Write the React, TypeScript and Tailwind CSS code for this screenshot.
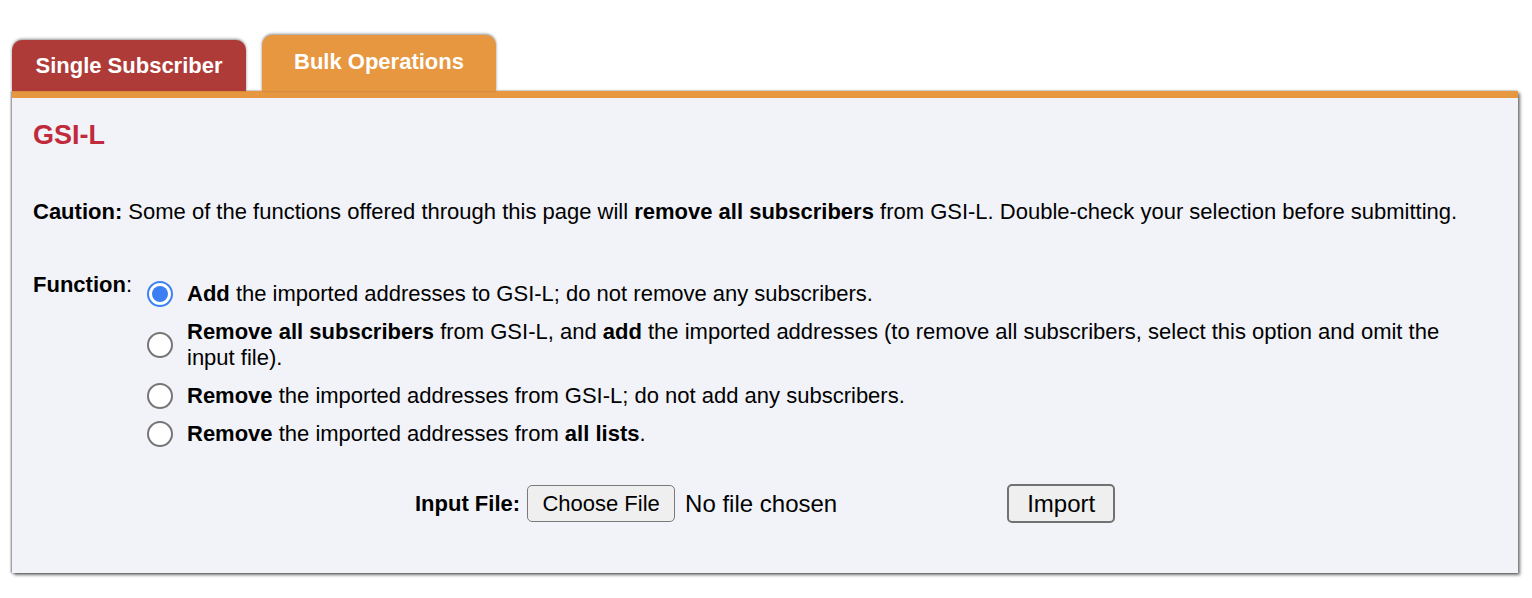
import React, { useState } from 'react';

const options = [
  {
    id: 'add',
    content: (
      <>
        <b>Add</b> the imported addresses to GSI-L; do not remove any subscribers.
      </>
    ),
  },
  {
    id: 'replace',
    content: (
      <>
        <b>Remove all subscribers</b> from GSI-L, and <b>add</b> the imported addresses (to remove all subscribers, select this option and omit the input file).
      </>
    ),
  },
  {
    id: 'remove',
    content: (
      <>
        <b>Remove</b> the imported addresses from GSI-L; do not add any subscribers.
      </>
    ),
  },
  {
    id: 'removeAll',
    content: (
      <>
        <b>Remove</b> the imported addresses from <b>all lists</b>.
      </>
    ),
  },
];

const Radio: React.FC<{ checked: boolean }> = ({ checked }) =>
  checked ? (
    <span className="block w-[26px] h-[26px] rounded-full border-[2px] border-[#3b82f6] bg-white p-[3px]">
      <span className="block w-full h-full rounded-full bg-[#3b7ff2]" />
    </span>
  ) : (
    <span className="block w-[26px] h-[26px] rounded-full border-[2px] border-[#767676] bg-white" />
  );

export default function App() {
  const [fn, setFn] = useState('add');

  return (
    <div className="min-h-[598px] bg-white pl-[12px] pr-[14px] pt-[35px] font-['Liberation_Sans',Arial,sans-serif] text-[22px] text-black">
      <div className="flex items-end gap-[16px]">
        <div className="w-[234px] h-[51px] rounded-t-[10px] bg-[#af3b38] shadow-[0_-1px_3px_rgba(0,0,0,0.45)] flex items-center justify-center pb-[1px] text-white font-bold text-[22px]">
          Single Subscriber
        </div>
        <div className="w-[234px] h-[56px] rounded-t-[10px] bg-[#e6973f] shadow-[0_-1px_3px_rgba(0,0,0,0.45)] flex items-center justify-center pb-[4px] text-white font-bold text-[22px]">
          Bulk Operations
        </div>
      </div>

      <div className="w-[1506px] h-[482px] bg-[#f2f3f8] border-t-[7px] border-[#e6973f] shadow-[2px_2px_3px_rgba(0,0,0,0.55),-1px_0_2px_rgba(0,0,0,0.5)] px-[21px]">
        <h1 className="pt-[20px] text-[27px] leading-[34px] font-bold text-[#c02a3b]">GSI-L</h1>

        <p className="mt-[47px] leading-[26px]">
          <b>Caution:</b> Some of the functions offered through this page will <b>remove all subscribers</b> from GSI-L. Double-check your selection before submitting.
        </p>

        <div className="mt-[47px] flex">
          <div className="w-[114px] shrink-0 leading-[26px]">
            <b>Function</b>:
          </div>
          <div className="flex flex-col gap-[12px] pt-[9px]">
            {options.map((o) => (
              <label key={o.id} className="flex items-center gap-[14px] cursor-pointer leading-[26px]" onClick={() => setFn(o.id)}>
                <span className="shrink-0">
                  <Radio checked={fn === o.id} />
                </span>
                <span className="max-w-[1262px]">{o.content}</span>
              </label>
            ))}
          </div>
        </div>

        <div className="mt-[37px] flex items-center">
          <div className="ml-[382px] flex items-center">
            <span className="font-bold mr-[7px]">Input File:</span>
            <button className="w-[148px] h-[37px] rounded-[5px] border border-[#7a7a7a] bg-[#efefef] text-[22px]">Choose File</button>
            <span className="ml-[10px] text-[24px]">No file chosen</span>
          </div>
          <button className="ml-[170px] w-[108px] h-[39px] rounded-[5px] border-[2px] border-[#727272] bg-[#efefef] text-[24px]">Import</button>
        </div>
      </div>
    </div>
  );
}
